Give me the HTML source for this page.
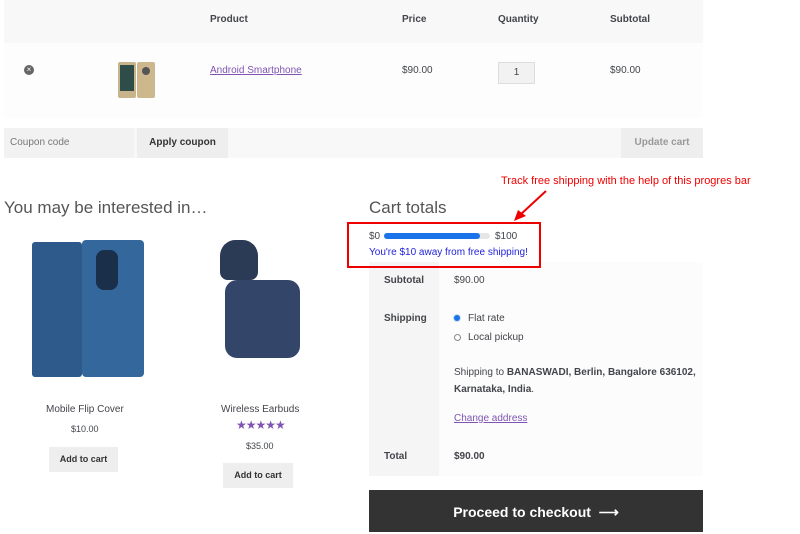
<!DOCTYPE html><html><head><style>
body{margin:0;width:800px;height:532px;background:#fff;font-family:"Liberation Sans",sans-serif;position:relative;overflow:hidden;color:#43454b}
.a{position:absolute}
.t{font-size:10px}
.b{font-weight:bold}
</style></head><body>
<div class="a" style="left:4px;top:0;width:699px;height:43px;background:#f8f8f8"></div>
<div class="a" style="left:4px;top:43px;width:699px;height:75px;background:#fdfdfd"></div>
<div class="a t b" style="left:210px;top:14px">Product</div>
<div class="a t b" style="left:402px;top:14px">Price</div>
<div class="a t b" style="left:498px;top:14px">Quantity</div>
<div class="a t b" style="left:610px;top:14px">Subtotal</div>
<div class="a" style="left:24px;top:65px;width:10px;height:10px;border-radius:50%;background:#666;color:#fff;font-size:8px;line-height:10px;text-align:center">×</div>
<div class="a" style="left:118px;top:62px;width:18px;height:36px;background:#c8b48a;border-radius:2px"><div style="margin:3px 2px;height:26px;background:#2f4d48"></div></div>
<div class="a" style="left:137px;top:62px;width:18px;height:36px;background:#cdb88e;border-radius:2px"><div style="margin:5px 5px;width:8px;height:8px;border-radius:50%;background:#555"></div></div>
<div class="a t" style="left:210px;top:65px;color:#7f54b3;text-decoration:underline">Android Smartphone</div>
<div class="a t" style="left:402px;top:65px">$90.00</div>
<div class="a t" style="left:498px;top:62px;width:37px;height:22px;background:#f2f2f2;border:1px solid #ddd;box-sizing:border-box;text-align:center;line-height:20px">1</div>
<div class="a t" style="left:610px;top:65px">$90.00</div>
<div class="a" style="left:4px;top:128px;width:699px;height:30px;background:#f8f8f8"></div>
<div class="a t" style="left:4px;top:128px;width:130px;height:30px;background:#f2f2f2;line-height:30px;padding-left:6px;box-sizing:border-box;color:#777">Coupon code</div>
<div class="a t b" style="left:137px;top:128px;width:91px;height:30px;background:#eee;line-height:30px;text-align:center;color:#333">Apply coupon</div>
<div class="a t b" style="left:621px;top:128px;width:82px;height:30px;background:#eee;line-height:30px;text-align:center;color:#999">Update cart</div>
<div class="a" style="left:4px;top:198px;font-size:17px;color:#555">You may be interested in…</div>
<div class="a" style="left:369px;top:198px;font-size:17px;color:#555">Cart totals</div>
<div class="a" style="left:32px;top:242px;width:50px;height:135px;background:#2d5a8a;border-radius:3px"></div>
<div class="a" style="left:82px;top:240px;width:62px;height:137px;background:#34679b;border-radius:4px"></div>
<div class="a" style="left:96px;top:250px;width:22px;height:40px;background:#1a2f4a;border-radius:8px"></div>
<div class="a" style="left:220px;top:240px;width:38px;height:40px;background:#2b3a55;border-radius:40% 40% 20% 20%"></div>
<div class="a" style="left:225px;top:280px;width:75px;height:78px;background:#34456a;border-radius:12px"></div>
<div class="a t" style="left:46px;top:404px">Mobile Flip Cover</div>
<div class="a" style="left:71px;top:424px;font-size:9px">$10.00</div>
<div class="a t b" style="left:49px;top:447px;width:69px;height:25px;background:#eee;line-height:25px;text-align:center;font-size:9px;color:#333">Add to cart</div>
<div class="a t" style="left:221px;top:404px">Wireless Earbuds</div>
<div class="a" style="left:236px;top:418px;font-size:12px;color:#7f54b3;letter-spacing:-1px">★★★★★</div>
<div class="a" style="left:246px;top:441px;font-size:9px">$35.00</div>
<div class="a t b" style="left:223px;top:463px;width:70px;height:25px;background:#eee;line-height:25px;text-align:center;font-size:9px;color:#333">Add to cart</div>
<div class="a" style="left:369px;top:262px;width:70px;height:214px;background:#f5f5f5"></div>
<div class="a" style="left:439px;top:262px;width:264px;height:214px;background:#fcfcfc"></div>
<div class="a t" style="left:369px;top:231px">$0</div>
<div class="a" style="left:384px;top:233px;width:106px;height:6px;border-radius:3px;background:#e6e6e6"><div style="width:96px;height:6px;border-radius:3px;background:#1a73e8"></div></div>
<div class="a t" style="left:495px;top:231px">$100</div>
<div class="a t" style="left:369px;top:247px;color:#2222dd">You're $10 away from free shipping!</div>
<div class="a" style="left:347px;top:222px;width:194px;height:46px;border:2px solid #e00;box-sizing:border-box"></div>
<div class="a t" style="left:501px;top:175px;color:#e00;font-size:11px">Track free shipping with the help of this progres bar</div>
<svg class="a" style="left:510px;top:188px" width="40" height="35"><line x1="36" y1="3" x2="10" y2="27" stroke="#e00" stroke-width="2"/><polygon points="4,33 8,22 16,28" fill="#e00"/></svg>
<div class="a t b" style="left:384px;top:275px">Subtotal</div>
<div class="a t" style="left:454px;top:275px">$90.00</div>
<div class="a t b" style="left:384px;top:313px">Shipping</div>
<div class="a" style="left:454px;top:315px;width:6px;height:6px;border-radius:50%;background:#1a73e8;box-shadow:0 0 0 1px #cde"></div>
<div class="a t" style="left:468px;top:313px">Flat rate</div>
<div class="a" style="left:454px;top:334px;width:5px;height:5px;border-radius:50%;border:1px solid #888"></div>
<div class="a t" style="left:468px;top:332px">Local pickup</div>
<div class="a t" style="left:454px;top:364px;line-height:17px">Shipping to <b>BANASWADI, Berlin, Bangalore 636102,<br>Karnataka, India</b>.</div>
<div class="a t" style="left:454px;top:413px;color:#7f54b3;text-decoration:underline">Change address</div>
<div class="a t b" style="left:384px;top:451px">Total</div>
<div class="a t b" style="left:454px;top:451px">$90.00</div>
<div class="a b" style="left:369px;top:490px;width:334px;height:42px;background:#333;color:#fff;font-size:14px;line-height:44px;text-align:center">Proceed to checkout &nbsp;⟶</div>
</body></html>
